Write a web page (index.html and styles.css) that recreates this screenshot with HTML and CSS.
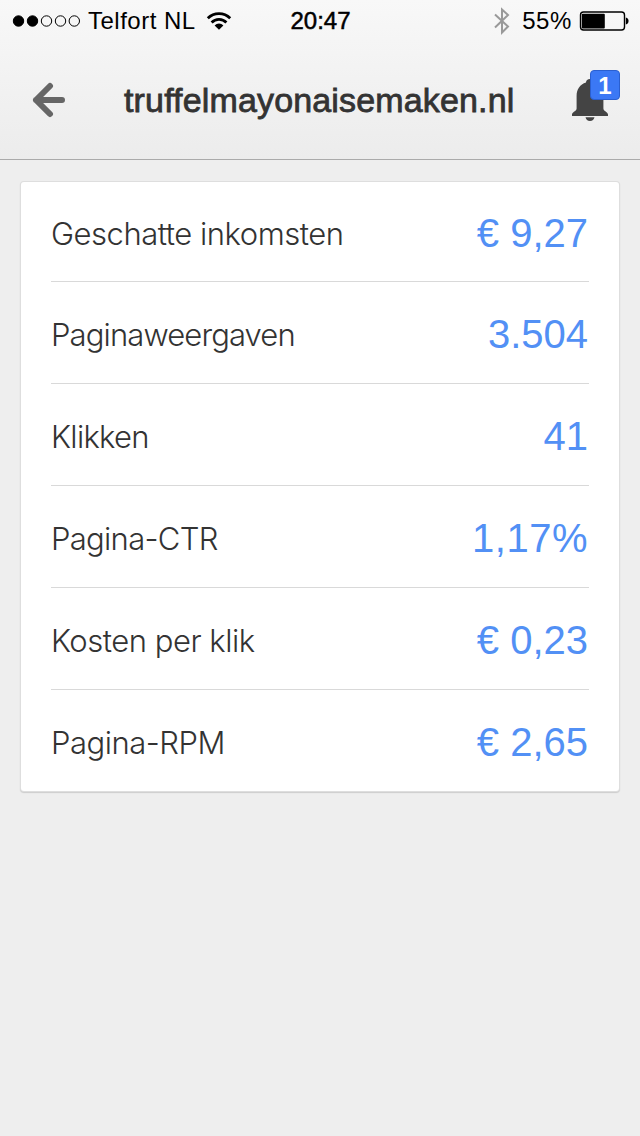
FILE: index.html
```html
<!DOCTYPE html>
<html lang="nl">
<head>
    <meta charset="UTF-8">
    <title>truffelmayonaisemaken.nl</title>
    <link rel="stylesheet" href="styles.css">
</head>
<body>
    <div class="header">
        <div class="status">
            <div class="status-left">
                <svg class="signal" width="68" height="14" viewBox="0 0 68 14">
                    <g stroke="#000" stroke-width="1">
                        <circle cx="6.500" cy="7" r="5.2"/>
                        <circle cx="20.500" cy="7" r="5.2"/>
                        <circle cx="34.500" cy="7" r="5.2" fill="none"/>
                        <circle cx="48.500" cy="7" r="5.2" fill="none"/>
                        <circle cx="62.300" cy="7" r="5.2" fill="none"/>
                    </g>
                </svg>
                <span class="carrier">Telfort NL</span>
                <svg class="wifi" width="26" height="20" viewBox="0 0 26 20">
                    <g fill="none" stroke="#000" stroke-width="2.8">
                        <path d="M1.8 7.2a15.8 15.8 0 0 1 22.4 0"/>
                        <path d="M5.6 11.4a10.4 10.4 0 0 1 14.8 0"/>
                    </g>
                    <path d="M8.6 14.4a6.2 6.2 0 0 1 8.8 0L13 18.8z"/>
                </svg>
            </div>
            <span class="time">20:47</span>
            <div class="status-right">
                <svg class="bluetooth" width="18" height="28" viewBox="0 0 18 28">
                    <path d="M2 7.5L15 19.5L9 25.5V2.5L15 8L2 20.5" fill="none" stroke="#999" stroke-width="2"/>
                </svg>
                <span class="percent">55%</span>
                <svg class="battery" width="50" height="20" viewBox="0 0 50 20">
                    <rect x="1.500" y="1" width="44" height="18" rx="3" fill="none" stroke="#000" stroke-width="1.4"/>
                    <rect x="2.8" y="2.7" width="23" height="14.8" rx="1"/>
                    <path d="M46.8 6.5a3.6 3.6 0 0 1 0 7z"/>
                </svg>
            </div>
        </div>
        <div class="nav">
            <svg class="back" width="34" height="36" viewBox="0 0 34 36">
                <path d="M18 4L4 18L18 32M4 18H30" fill="none" stroke="#666" stroke-width="6" stroke-linecap="round" stroke-linejoin="round"/>
            </svg>
            <h1 class="title">truffelmayonaisemaken.nl</h1>
            <div class="alerts">
                <svg class="bell" width="36" height="44" viewBox="0 0 36 44">
                    <path d="M18 0c-2.400 0-4 1.400-4 3.600C8 5.500 4.600 10.500 4.600 17v12.500c0 2.800-4.600 3.500-4.600 6V37h36v-1.500c0-2.500-4.600-3.200-4.600-6V17c0-6.500-3.400-11.500-9.400-13.400C22 1.400 20.400 0 18 0zM13.500 38.300h9a4.600 4.600 0 0 1-9 0z" fill="#444"/>
                </svg>
                <span class="badge">1</span>
            </div>
        </div>
    </div>
    <ul class="card">
        <li><span class="label wide">Geschatte inkomsten</span><span class="value">€ 9,27</span></li>
        <li><span class="label tight">Paginaweergaven</span><span class="value">3.504</span></li>
        <li><span class="label">Klikken</span><span class="value">41</span></li>
        <li><span class="label">Pagina-CTR</span><span class="value ctr">1,17%</span></li>
        <li><span class="label wide">Kosten per klik</span><span class="value">€ 0,23</span></li>
        <li><span class="label wide">Pagina-RPM</span><span class="value">€ 2,65</span></li>
    </ul>
</body>
</html>
```
FILE: styles.css
```css
*{
    margin: 0;
    padding: 0;
    box-sizing: border-box;
}
body{
    width: 640px;
    height: 1136px;
    overflow: hidden;
    background: #eee;
    font-family: "Liberation Sans", Arial, sans-serif;
}
li{
    list-style: none;
}
svg{
    display: block;
    flex: none;
}
.header{
    height: 160px;
    background: linear-gradient(#f8f8f8, #ececec);
    border-bottom: 1px solid #aaa;
}
.status{
    display: grid;
    grid-template-columns: 1fr 60px 1fr;
    align-items: center;
    height: 41px;
    padding: 0 11px 0 12px;
    font-size: 24px;
    line-height: 40px;
    white-space: nowrap;
}
.status-left, .status-right{
    display: flex;
    align-items: center;
}
.status-right{
    justify-content: flex-end;
}
.carrier{
    margin: 0 10px 0 8px;
    letter-spacing: 0.5px;
}
.time{
    -webkit-text-stroke: 0.5px #000;
}
.bluetooth{
    margin-right: 1px;
}
.percent{
    margin: 0 7px 0 10px;
    letter-spacing: 0.6px;
}
.nav{
    display: flex;
    align-items: center;
    height: 118px;
    padding: 0 20px 0 32px;
}
.title{
    margin-left: 58px;
    font-size: 34px;
    font-weight: normal;
    line-height: 40px;
    letter-spacing: 0.15px;
    color: #333;
    -webkit-text-stroke: 0.8px #333;
}
.alerts{
    position: relative;
    width: 48px;
    height: 52px;
    margin: -8px 0 0 auto;
    padding-top: 9px;
}
.badge{
    position: absolute;
    top: 0;
    right: 0;
    width: 30px;
    height: 30px;
    border: 1px solid #2a5fd0;
    border-radius: 4px;
    background: #3b78f5;
    color: #fff;
    font-size: 24px;
    font-weight: bold;
    line-height: 29px;
    text-align: center;
}
.card{
    width: 598px;
    height: 609px;
    margin: 22px 0 0 21px;
    padding: 0 30px;
    border-radius: 3px;
    background: #fff;
    box-shadow: 0 0 0 1px #dedede, 0 1px 1px 1px #ccc;
}
.card li{
    display: flex;
    justify-content: space-between;
    align-items: center;
    height: 102px;
    border-bottom: 1px solid #d9d9d9;
}
.card li:first-child{
    height: 100px;
}
.card li:last-child{
    border-bottom: none;
}
.label{
    padding-top: 4px;
    font-family: Inter, "Liberation Sans", sans-serif;
    font-size: 31px;
    font-weight: 300;
    line-height: 40px;
    color: #333;
    letter-spacing: -0.7px;
}
.label.wide{
    letter-spacing: -0.48px;
}
.label.tight{
    letter-spacing: -0.88px;
}
.value{
    padding: 2px 1px 0 0;
    font-size: 40px;
    line-height: 46px;
    color: #5290f5;
}
.value.ctr{
    letter-spacing: 0.5px;
}
```
